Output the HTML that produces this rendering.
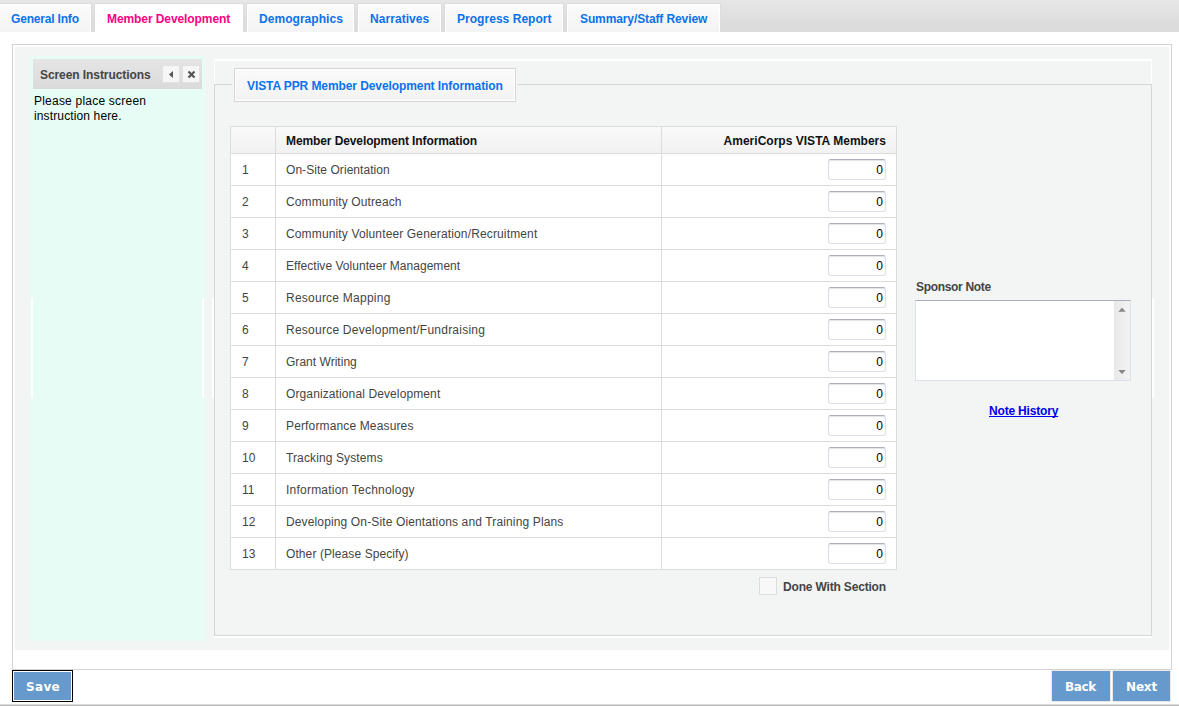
<!DOCTYPE html>
<html><head><meta charset="utf-8"><title>VISTA PPR Member Development</title>
<style>
html,body{margin:0;padding:0;}
body{width:1179px;height:706px;overflow:hidden;background:#fff;position:relative;font-family:"Liberation Sans",sans-serif;font-size:12px;color:#444;}
.abs{position:absolute;white-space:nowrap;}
#bar{position:absolute;left:0;top:0;width:1179px;height:32px;background:linear-gradient(#e7e7e7 0,#dcdcdc 75%,#dcdcdc 100%);}
.tab{position:absolute;top:3px;height:29px;box-sizing:border-box;border:1px solid #dcdcdc;border-bottom:0;box-shadow:inset 1px 1px 0 #fff,inset -1px 0 0 #fff;background:linear-gradient(#fbfbfb,#f4f4f4);color:#0a72ec;font-weight:bold;font-size:12px;line-height:30px;white-space:nowrap;}
.tab span{position:absolute;top:0;}
.tab.act{background:#fff;color:#ff0084;}
#outer{position:absolute;left:12px;top:44px;width:1160px;height:626px;box-sizing:border-box;border:1px solid #d4d4d4;background:#fff;}
#obg{position:absolute;left:15px;top:47px;width:1154px;height:603px;background:#f3f5f4;}
#mint{position:absolute;left:30px;top:56px;width:175px;height:585px;background:#e6fcf4;}
#sihead{position:absolute;left:33px;top:59px;width:169px;height:30px;background:linear-gradient(#e5e5e5,#dadada);}
#sihead .t{position:absolute;left:7px;top:1px;line-height:31px;font-weight:bold;color:#444;white-space:nowrap;}
.ib{position:absolute;top:7px;width:16px;height:16px;background:#f6f6f6;box-shadow:0 0 0 1px #e1e1e1;}
#sitext{position:absolute;left:34px;top:94px;line-height:15px;color:#000;white-space:nowrap;}
.wl{position:absolute;top:298px;width:2px;height:100px;background:#fff;}
#fs{position:absolute;left:214px;top:84px;width:938px;height:552px;box-sizing:border-box;border:1px solid #d6d6d6;}
#legend{position:absolute;left:234px;top:68px;width:282px;height:34px;box-sizing:border-box;border:1px solid #d6d6d6;box-shadow:inset 0 0 0 1px #fff;background:linear-gradient(#fafafa,#f3f3f3);color:#0a72ec;font-weight:bold;line-height:34px;white-space:nowrap;}
#legend span{position:absolute;left:12px;top:0;}
#tbl{position:absolute;left:230px;top:126px;width:667px;height:444px;box-sizing:border-box;border:1px solid #dcdcdc;background:#fff;}
#th{position:absolute;left:0;top:0;width:665px;height:26px;background:linear-gradient(#f9f9f9,#f2f2f2);border-bottom:1px solid #dcdcdc;color:#111;font-weight:bold;line-height:28px;}
.vl{position:absolute;top:0;width:1px;height:442px;background:#dcdcdc;}
.tr{position:absolute;left:0;width:665px;height:31px;border-bottom:1px solid #dcdcdc;line-height:32px;color:#444;}
.tr:last-child{border-bottom:0;}
.tr .n{position:absolute;left:11px;}
.tr .l{position:absolute;left:55px;white-space:nowrap;}
.inp{position:absolute;left:597px;top:5px;width:58px;height:21px;box-sizing:border-box;border:1px solid #dadee8;border-top-color:#abafbb;border-radius:3px;background:#fff;color:#000;text-align:right;padding-right:2px;line-height:20px;box-shadow:inset 0 1px 1px #e4e4e8;}
#cb{position:absolute;left:759px;top:577px;width:18px;height:18px;box-sizing:border-box;border:1px solid #dcdcdc;background:#f8f8f8;}
.btn{position:absolute;top:670px;height:32px;box-sizing:border-box;background:#6699cc;color:#fff;font-family:"DejaVu Sans",sans-serif;font-weight:bold;font-size:12px;line-height:30px;border:1px solid #ece8e4;white-space:nowrap;}
.btn span{position:absolute;top:1px;}
</style></head><body>
<div id="bar"></div>
<div class="tab" style="left:-2px;width:94px"><span style="left:12px;letter-spacing:-0.182px;">General Info</span></div>
<div class="tab act" style="left:94px;width:150px"><span style="left:12px;letter-spacing:-0.088px;">Member Development</span></div>
<div class="tab" style="left:246px;width:109px"><span style="left:12px;letter-spacing:0.045px;">Demographics</span></div>
<div class="tab" style="left:357px;width:85px"><span style="left:12px;letter-spacing:0.056px;">Narratives</span></div>
<div class="tab" style="left:444px;width:120px"><span style="left:12px;letter-spacing:0.036px;">Progress Report</span></div>
<div class="tab" style="left:566px;width:155px"><span style="left:13px;letter-spacing:-0.111px;">Summary/Staff Review</span></div>

<div id="outer"></div>
<div id="obg"></div>
<div id="mint"></div>
<div id="sihead"><span class="t" style="letter-spacing:-0.078px;">Screen Instructions</span>
<div class="ib" style="left:130px"><svg width="16" height="16" style="display:block"><path d="M10 5 L10 12 L6 8.5 Z" fill="#555"/></svg></div>
<div class="ib" style="left:150px"><svg width="16" height="16" style="display:block"><path d="M5.5 5.5 L11.5 11.5 M11.5 5.5 L5.5 11.5" stroke="#555" stroke-width="2.2" fill="none"/></svg></div>
</div>
<div id="sitext"><span style="letter-spacing:0.217px;">Please place screen</span><br><span style="letter-spacing:0.131px;">instruction here.</span></div>
<div class="wl" style="left:31px"></div><div class="wl" style="left:202px"></div><div class="wl" style="left:212px"></div><div class="wl" style="left:1152px"></div>

<div class="abs" style="left:214px;top:59px;width:938px;height:2px;background:#fff"></div>
<div class="abs" style="left:214px;top:59px;width:1px;height:25px;background:#fff"></div>
<div class="abs" style="left:1151px;top:59px;width:1px;height:25px;background:#fff"></div>
<div class="abs" style="left:214px;top:636px;width:938px;height:2px;background:#fff"></div>
<div id="fs"></div>
<div class="abs" style="left:232px;top:84px;width:286px;height:1px;background:#f3f5f4"></div>
<div id="legend"><span style="letter-spacing:-0.090px;">VISTA PPR Member Development Information</span></div>

<div id="tbl">
<div id="th"><span class="abs" style="left:55px;letter-spacing:-0.103px;">Member Development Information</span><span class="abs" style="right:10px;letter-spacing:0.017px;">AmeriCorps VISTA Members</span></div>
<div class="vl" style="left:44px"></div><div class="vl" style="left:430px"></div>
<div class="tr" style="top:27px"><span class="n">1</span><span class="l" style="letter-spacing:0.056px;">On-Site Orientation</span><span class="inp">0</span></div>
<div class="tr" style="top:59px"><span class="n">2</span><span class="l" style="letter-spacing:0.124px;">Community Outreach</span><span class="inp">0</span></div>
<div class="tr" style="top:91px"><span class="n">3</span><span class="l" style="letter-spacing:0.141px;">Community Volunteer Generation/Recruitment</span><span class="inp">0</span></div>
<div class="tr" style="top:123px"><span class="n">4</span><span class="l" style="letter-spacing:0.031px;">Effective Volunteer Management</span><span class="inp">0</span></div>
<div class="tr" style="top:155px"><span class="n">5</span><span class="l" style="letter-spacing:0.240px;">Resource Mapping</span><span class="inp">0</span></div>
<div class="tr" style="top:187px"><span class="n">6</span><span class="l" style="letter-spacing:0.242px;">Resource Development/Fundraising</span><span class="inp">0</span></div>
<div class="tr" style="top:219px"><span class="n">7</span><span class="l" style="letter-spacing:0.025px;">Grant Writing</span><span class="inp">0</span></div>
<div class="tr" style="top:251px"><span class="n">8</span><span class="l" style="letter-spacing:0.112px;">Organizational Development</span><span class="inp">0</span></div>
<div class="tr" style="top:283px"><span class="n">9</span><span class="l" style="letter-spacing:0.142px;">Performance Measures</span><span class="inp">0</span></div>
<div class="tr" style="top:315px"><span class="n">10</span><span class="l" style="letter-spacing:0.120px;">Tracking Systems</span><span class="inp">0</span></div>
<div class="tr" style="top:347px"><span class="n">11</span><span class="l" style="letter-spacing:0.224px;">Information Technology</span><span class="inp">0</span></div>
<div class="tr" style="top:379px"><span class="n">12</span><span class="l" style="letter-spacing:0.135px;">Developing On-Site Oientations and Training Plans</span><span class="inp">0</span></div>
<div class="tr" style="top:411px"><span class="n">13</span><span class="l" style="letter-spacing:0.090px;">Other (Please Specify)</span><span class="inp">0</span></div>
</div>
<div id="cb"></div>
<div class="abs" style="left:783px;top:579px;line-height:16px;font-weight:bold;color:#444;letter-spacing:-0.175px;">Done With Section</div>

<div class="abs" style="left:916px;top:279px;line-height:16px;font-weight:bold;color:#444;letter-spacing:-0.318px;">Sponsor Note</div>
<div class="abs" id="ta" style="left:915px;top:300px;width:216px;height:81px;box-sizing:border-box;border:1px solid #dde1ea;border-top-color:#abafbb;background:#fff">
<div class="abs" style="right:0;top:0;width:16px;height:79px;background:linear-gradient(90deg,#e8e8e8,#f3f3f3)"></div>
<svg class="abs" style="right:0;top:0" width="16" height="79"><path d="M4.3 10.8 L11.7 10.8 L8 6.8 Z" fill="#858585"/><path d="M4.3 69 L11.7 69 L8 73 Z" fill="#858585"/></svg>
</div>
<div class="abs" style="left:989px;top:403px;line-height:16px;font-weight:bold;color:#0000f0;text-decoration:underline;text-decoration-skip-ink:none;letter-spacing:-0.182px;">Note History</div>

<div class="btn" style="left:12px;width:61px;border:1px solid #000;box-shadow:inset 0 0 0 1px #fff"><span style="left:13px;letter-spacing:0.333px;">Save</span></div>
<div class="btn" style="left:1051px;width:60px"><span style="left:13px;letter-spacing:-0.333px;">Back</span></div>
<div class="btn" style="left:1112px;width:59px"><span style="left:13px;letter-spacing:-0.167px;">Next</span></div>
<div class="abs" style="left:0;top:704px;width:1179px;height:1px;background:#dadada"></div><div class="abs" style="left:0;top:705px;width:1179px;height:1px;background:#bababa"></div>
</body></html>
